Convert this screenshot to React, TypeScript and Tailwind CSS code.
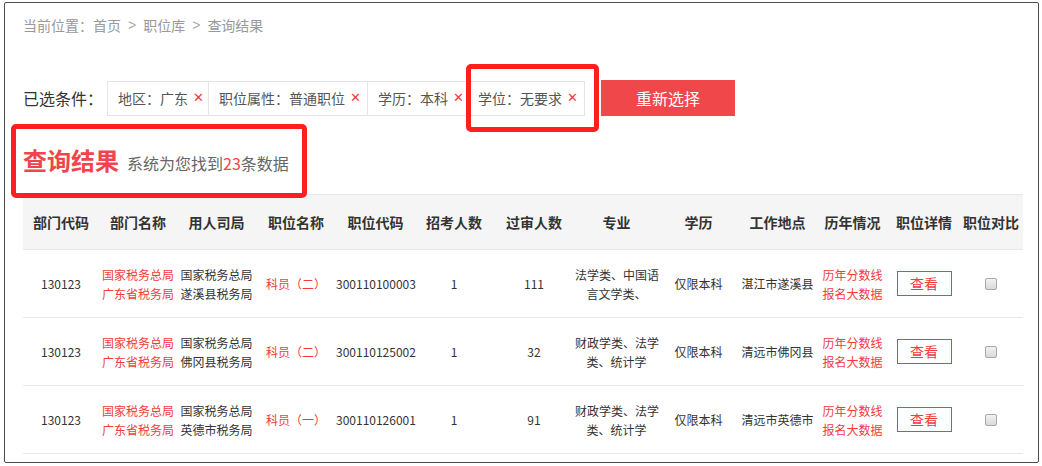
import React from "react";

const headers = [
  "部门代码",
  "部门名称",
  "用人司局",
  "职位名称",
  "职位代码",
  "招考人数",
  "过审人数",
  "专业",
  "学历",
  "工作地点",
  "历年情况",
  "职位详情",
  "职位对比",
];

const colWidths = [76, 78, 79, 80, 79, 78, 82, 83, 81, 77, 73, 70, 64];

const chips = [
  { text: "地区：广东", w: "w-[102px]" },
  { text: "职位属性：普通职位", w: "w-[160px]" },
  { text: "学历：本科", w: "w-[101px]" },
  { text: "学位：无要求", w: "w-[118px]" },
];

const rows = [
  {
    code: "130123",
    bureau: "遂溪县税务局",
    title: "科员（二）",
    posCode: "300110100003",
    quota: "1",
    passed: "111",
    major: ["法学类、中国语", "言文学类、"],
    place: "湛江市遂溪县",
  },
  {
    code: "130123",
    bureau: "佛冈县税务局",
    title: "科员（二）",
    posCode: "300110125002",
    quota: "1",
    passed: "32",
    major: ["财政学类、法学", "类、统计学"],
    place: "清远市佛冈县",
  },
  {
    code: "130123",
    bureau: "英德市税务局",
    title: "科员（一）",
    posCode: "300110126001",
    quota: "1",
    passed: "91",
    major: ["财政学类、法学", "类、统计学"],
    place: "清远市英德市",
  },
];

export default function App() {
  return (
    <div
      className="relative w-[1042px] h-[466px] bg-white overflow-hidden"
      style={{ fontFamily: '"Noto Sans CJK SC", "Liberation Sans", sans-serif' }}
    >
      {/* outer frame */}
      <div className="ml-[4px] mt-[2px] w-[1035px] h-[461px] border border-[#4d4d4d] rounded-[2px] pl-[18px] overflow-hidden">
        {/* Breadcrumb */}
        <div className="pt-[12px] h-[32px] flex items-center text-[14px] leading-[20px] text-[#999]">
          <span>当前位置：首页</span>
          <span className="px-[7px] text-[#aaa]" style={{ fontFamily: '"Liberation Sans", sans-serif' }}>&gt;</span>
          <span>职位库</span>
          <span className="px-[7px] text-[#aaa]" style={{ fontFamily: '"Liberation Sans", sans-serif' }}>&gt;</span>
          <span>查询结果</span>
        </div>

        {/* Selected filters */}
        <div className="mt-[45px] h-[36px] flex items-center">
          <span className="w-[84px] text-[16px] text-[#333]">已选条件：</span>
          <div className="flex h-[35px]">
            {chips.map((c, i) => (
              <div
                key={c.text}
                className={`flex items-center shrink-0 h-[35px] border border-[#e5e5e5] pl-[10px] text-[14px] text-[#555] ${c.w} ${
                  i > 0 ? "-ml-px" : ""
                }`}
              >
                <span className="whitespace-nowrap">{c.text}</span>
                <span className="ml-[5px] text-[#f23b3b] text-[13px]" style={{ fontFamily: '"DejaVu Sans", sans-serif' }}>
                  ✕
                </span>
              </div>
            ))}
          </div>
          <button className="ml-[16px] w-[134px] h-[36px] bg-[#f0474a] text-white text-[16px]">重新选择</button>
        </div>

        {/* Title */}
        <div className="h-[78px] pt-[28px] flex items-baseline">
          <span className="text-[24px] leading-[32px] font-bold text-[#f0454a]">查询结果</span>
          <span className="ml-[8px] text-[16px] text-[#666]">
            系统为您找到<span className="text-[#f0454a]">23</span>条数据
          </span>
        </div>

        {/* Table */}
        <table className="table-fixed w-[1000px] border-collapse">
          <colgroup>
            {colWidths.map((w, i) => (
              <col key={i} style={{ width: w }} />
            ))}
          </colgroup>
          <thead>
            <tr className="bg-[#f5f5f5] border-t border-[#e8e8e8] border-b border-b-[#e8e8e8]">
              {headers.map((h) => (
                <th key={h} className="h-[55px] p-0 text-[14px] font-bold text-[#333] whitespace-nowrap text-center">
                  {h}
                </th>
              ))}
            </tr>
          </thead>
          <tbody>
            {rows.map((r, i) => (
              <tr key={i} className="border-b border-[#e8e8e8] text-[12px] leading-[19px] text-[#333]">
                <td className="h-[68px] p-0 text-center">{r.code}</td>
                <td className="p-0 text-center text-[#f23b3b] whitespace-nowrap">
                  国家税务总局
                  <br />
                  广东省税务局
                </td>
                <td className="p-0 text-center whitespace-nowrap">
                  国家税务总局
                  <br />
                  {r.bureau}
                </td>
                <td className="p-0 text-center text-[#f23b3b] whitespace-nowrap">{r.title}</td>
                <td className="p-0 text-center">{r.posCode}</td>
                <td className="p-0 text-center">{r.quota}</td>
                <td className="p-0 text-center">{r.passed}</td>
                <td className="p-0 text-center whitespace-nowrap">
                  {r.major[0]}
                  <br />
                  {r.major[1]}
                </td>
                <td className="p-0 text-center whitespace-nowrap">仅限本科</td>
                <td className="p-0 text-center whitespace-nowrap">{r.place}</td>
                <td className="p-0 text-center text-[#f23b3b] whitespace-nowrap">
                  历年分数线
                  <br />
                  报名大数据
                </td>
                <td className="p-0 text-center">
                  <span className="inline-flex items-center justify-center w-[55px] h-[25px] border border-[#f23b3b] text-[#f23b3b] text-[14px]">
                    查看
                  </span>
                </td>
                <td className="p-0">
                  <div className="flex justify-center">
                    <input
                      type="checkbox"
                      className="appearance-none block w-[12px] h-[12px] rounded-[2px] border border-[#a8a8a8] bg-gradient-to-b from-[#f2f2f2] to-[#d9d9d9]"
                    />
                  </div>
                </td>
              </tr>
            ))}
          </tbody>
        </table>
      </div>

      {/* annotation boxes */}
      <div className="absolute left-[466px] top-[64px] w-[133px] h-[68px] border-[5px] border-[#ff1f1f] rounded-[5px]" />
      <div className="absolute left-[11px] top-[124px] w-[296px] h-[74px] border-[5px] border-[#ff1f1f] rounded-[5px]" />
    </div>
  );
}
